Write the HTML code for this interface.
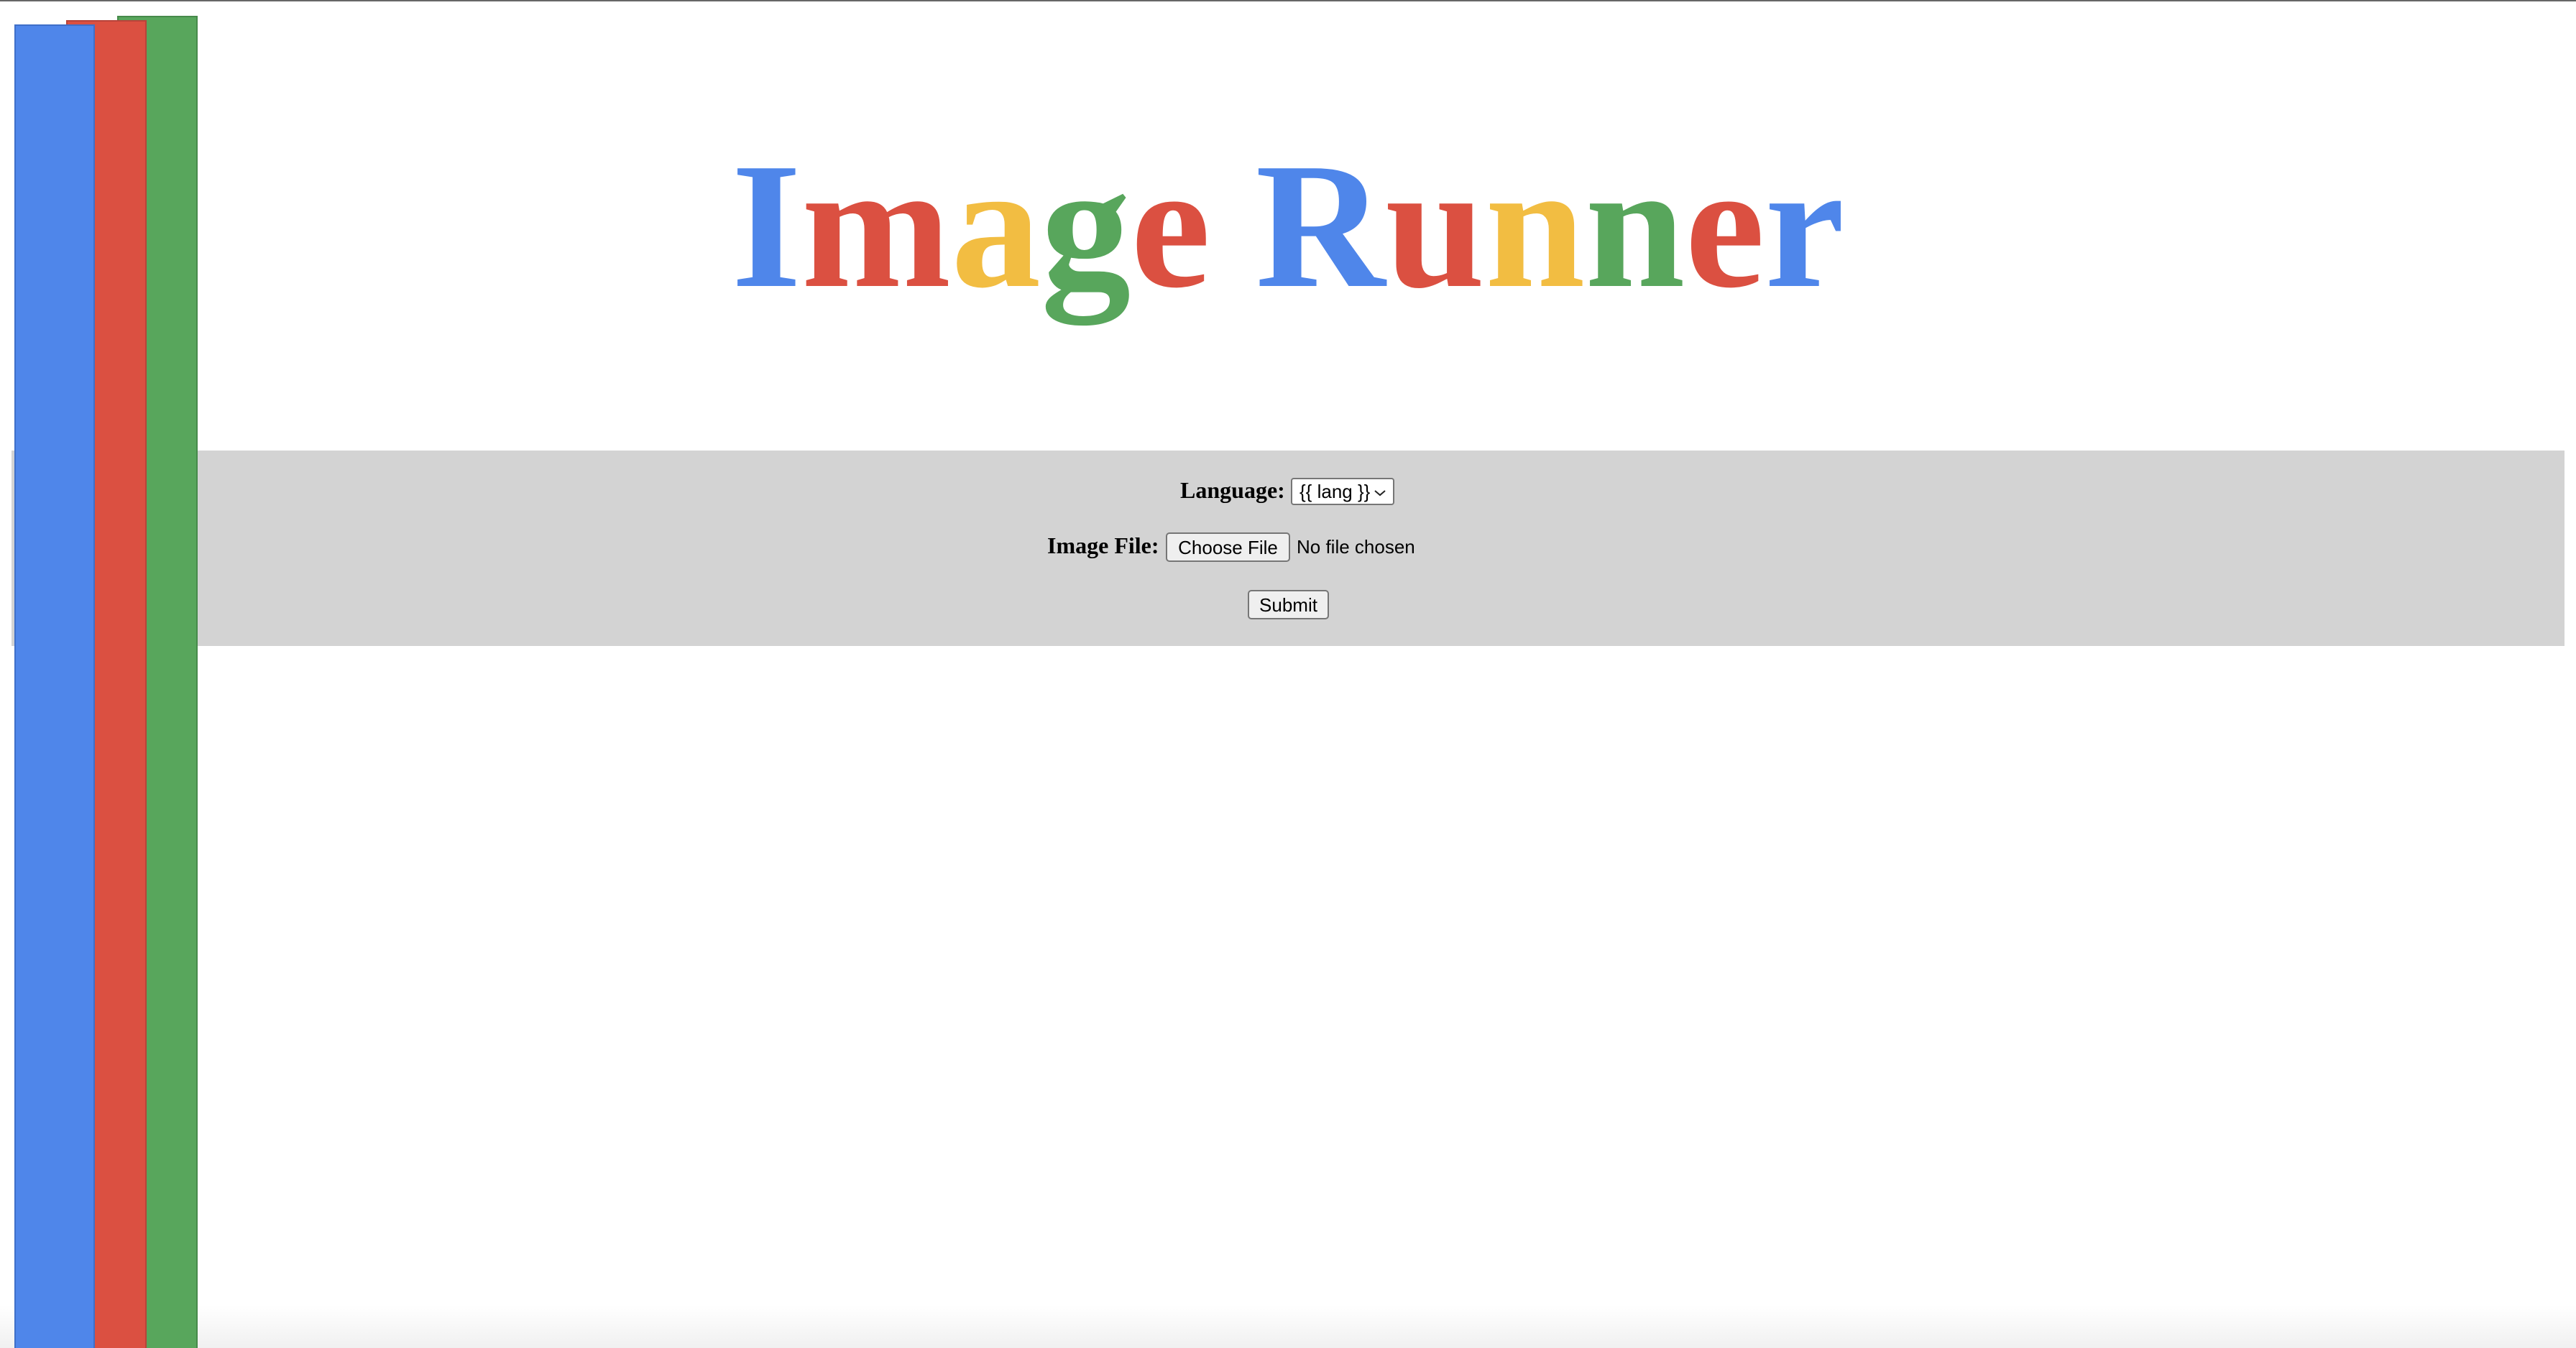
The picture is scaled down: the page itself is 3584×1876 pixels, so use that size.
<!DOCTYPE html>
<html><head><meta charset="utf-8"><style>
html,body{margin:0;padding:0;width:3584px;height:1876px;overflow:hidden;background:#fff;position:relative}
.top{position:absolute;left:0;top:0;width:3584px;height:2px;background:#666}
.bar{position:absolute;bottom:-2px;width:108px;border:2px solid}
.band{position:absolute;left:16px;top:627px;width:3552px;height:272px;background:#d3d3d3}
h1{position:absolute;left:0;top:0;width:3584px;margin:0;text-align:center;font:bold 250px/1 "Liberation Serif",serif;top:190px;white-space:nowrap}
.lbl{position:absolute;font:bold 32px/1 "Liberation Serif",serif;color:#000;white-space:nowrap}
.btn{position:absolute;box-sizing:border-box;background:#efefef;border:2px solid #767676;border-radius:5px;font:26px/1 "Liberation Sans",sans-serif;color:#000;display:flex;align-items:center;justify-content:center}
.txt{position:absolute;font:26px/1 "Liberation Sans",sans-serif;color:#000;white-space:nowrap}
.shade{position:absolute;left:0;bottom:0;width:3584px;height:60px;background:linear-gradient(to bottom,rgba(0,0,0,0),rgba(0,0,0,0.06))}
</style></head><body>
<div class="top"></div>
<div class="shade"></div>
<div class="band"></div>
<div class="bar" style="left:163px;top:22px;background:#58a65c;border-color:#468a4a"></div>
<div class="bar" style="left:92px;top:28px;background:#db5041;border-color:#b8433a"></div>
<div class="bar" style="left:20px;top:34px;background:#4f86ea;border-color:#3f6fc8"></div>
<h1><span style="color:#4f86ea">I</span><span style="color:#db5041">m</span><span style="color:#f2bd42">a</span><span style="color:#58a65c">g</span><span style="color:#db5041">e</span> <span style="color:#4f86ea">R</span><span style="color:#db5041">u</span><span style="color:#f2bd42">n</span><span style="color:#58a65c">n</span><span style="color:#db5041">e</span><span style="color:#4f86ea">r</span></h1>
<div class="lbl" style="left:1642px;top:666px">Language:</div>
<div class="btn" style="left:1796px;top:665px;width:144px;height:38px;background:#fff;justify-content:flex-start;padding-left:10px;border-radius:4px">{{ lang }}<svg style="position:absolute;right:8px;top:12px" width="20" height="14" viewBox="0 0 20 14"><path d="M3 4 L10 10 L17 4" fill="none" stroke="#222" stroke-width="2"/></svg></div>
<div class="lbl" style="left:1457px;top:743px">Image File:</div>
<div class="btn" style="left:1622px;top:741px;width:173px;height:41px">Choose File</div>
<div class="txt" style="left:1804px;top:748px">No file chosen</div>
<div class="btn" style="left:1736px;top:821px;width:113px;height:41px">Submit</div>
</body></html>
